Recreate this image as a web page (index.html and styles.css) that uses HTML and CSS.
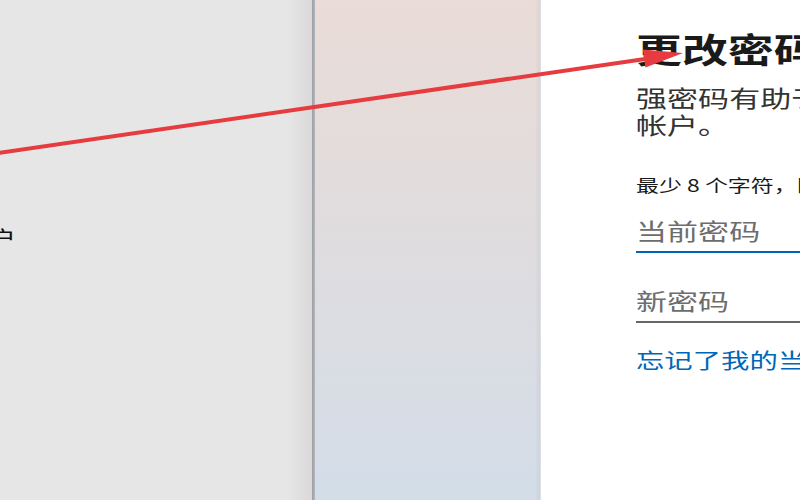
FILE: index.html
```html
<!DOCTYPE html>
<html lang="zh-CN">
<head>
    <meta charset="UTF-8">
    <meta name="viewport" content="width=device-width, initial-scale=1.0">
    <title>更改密码</title>
    <link rel="stylesheet" href="styles.css">
</head>
<body>
    <div class="screen">
        <div class="side">
            <div class="side-label">帐户</div>
        </div>
        <div class="divider"></div>
        <div class="backdrop"></div>
        <div class="dialog">
            <div class="dialog-inner">
                <h1 class="title">更改密码</h1>
                <p class="subtitle">强密码有助于保护你的帐户。</p>
                <p class="hint">最少 8 个字符，区分大小写</p>
                <input class="field active" type="password" placeholder="当前密码">
                <input class="field" type="password" placeholder="新密码">
                <a class="link" href="#">忘记了我的当前密码</a>
            </div>
        </div>

        <svg class="arrow" width="800" height="500" viewBox="0 0 800 500">
            <line x1="-2" y1="153" x2="652" y2="58" stroke="#e63b3f" stroke-width="4" stroke-linecap="round"/>
            <polygon points="683,53 645.4,67.4 642.8,49.6" fill="#e63b3f"/>
        </svg>
    </div>
</body>
</html>
```

FILE: styles.css
```css
* {
    box-sizing: border-box;
}
html, body {
    margin: 0;
    padding: 0;
}
body {
    font-family: "Noto Sans CJK SC", "Noto Sans", sans-serif;
    background-color: #ffffff;
    overflow: hidden;
}
.screen {
    position: relative;
    display: flex;
    width: 800px;
    height: 500px;
    overflow: hidden;
}
.side {
    width: 312px;
    flex-shrink: 0;
    background: linear-gradient(to right, #e6e6e6 0, #e6e6e6 288px, #dbd8d8 312px);
    padding-top: 224px;
}
.side-label {
    margin-left: -38px;
    font-size: 20px;
    line-height: 28px;
    color: #111;
    transform: scaleX(1.35);
    transform-origin: left center;
}
.divider {
    width: 3px;
    flex-shrink: 0;
    background: linear-gradient(to right, #9b9ea3, #b4b7bc);
}
.backdrop {
    width: 226px;
    flex-shrink: 0;
    background: linear-gradient(180deg, #eadcd8 0%, #e1dcdd 40%, #d3dde8 100%);
    border-right: 1px solid #dcdfe3;
    box-shadow: inset -5px 0 4px -3px rgba(0,0,0,0.05);
}
.dialog {
    flex: 1;
    background-color: #ffffff;
    padding-left: 95px;
    padding-top: 27px;
    overflow: hidden;
}
.dialog-inner {
    width: 330px;
    transform: scaleX(1.35);
    transform-origin: left top;
}
.title {
    margin: 0;
    font-size: 34px;
    line-height: 44px;
    font-weight: bold;
    color: #1a1a1a;
    white-space: nowrap;
}
.subtitle {
    margin: 13px 0 0;
    width: 238px;
    font-size: 23px;
    line-height: 27px;
    color: #333333;
}
.hint {
    margin: 37px 0 0;
    font-size: 17px;
    line-height: 20px;
    color: #1a1a1a;
    white-space: nowrap;
}
.field {
    display: block;
    width: 300px;
    margin: 18px 0 0;
    padding: 0 0 4px;
    border: none;
    border-bottom: 2px solid #666666;
    outline: none;
    background: transparent;
    font-family: "Noto Sans CJK SC", "Noto Sans", sans-serif;
    font-size: 23px;
    line-height: 34px;
    height: 40px;
    color: #222;
}
.field + .field {
    margin-top: 30px;
}
.field.active {
    border-bottom-color: #0067b8;
}
.field::placeholder {
    color: #6d6d6d;
}
.link {
    display: block;
    margin-top: 24px;
    font-size: 21px;
    line-height: 24px;
    color: #0067b8;
    text-decoration: none;
    white-space: nowrap;
}
.arrow {
    position: absolute;
    left: 0;
    top: 0;
    pointer-events: none;
}
```
